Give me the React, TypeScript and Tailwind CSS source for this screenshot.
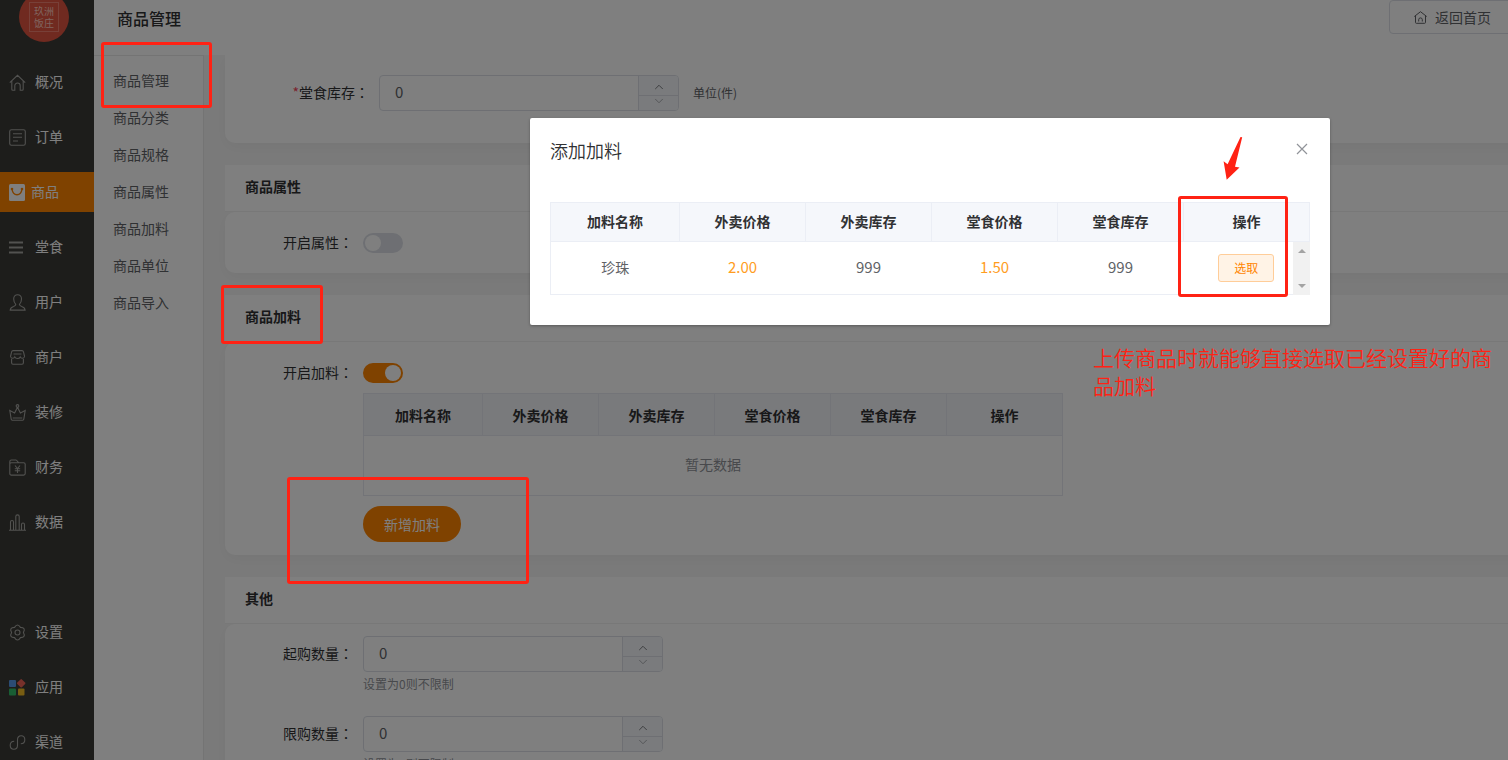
import React from "react";
import { ChevronDown, ChevronUp } from "lucide-react";
import clsx from "clsx";

const icons: Record<string, React.ReactNode> = {
  home: <path d="M.8 8.7 8.5 1.3l7.7 7.4M2.8 7v8.3c0 .6.4 1 1 1h2v-4.6a2.7 2.7 0 0 1 5.4 0v4.6h2c.6 0 1-.4 1-1V7" />,
  order: (
    <>
      <rect x=".7" y=".7" width="15.6" height="15.6" rx="1.8" />
      <path d="M4 4.7h9M4 8.3h9M4 12h5" />
    </>
  ),
  goods: (
    <>
      <rect x="0" y="0" width="16" height="17" rx="1.5" fill="#fff" stroke="none" />
      <path d="M3 5.2c1 7.4 9 7.4 10 0" stroke="#ff8400" strokeWidth="1.3" />
      <circle cx="3" cy="5" r="1.3" fill="#ff8400" stroke="none" />
      <circle cx="13" cy="5" r="1.3" fill="#ff8400" stroke="none" />
    </>
  ),
  dinein: <path d="M0 3.5h14M0 8.5h14M0 13.5h14" strokeWidth="2" />,
  user: (
    <path d="M6.8 10.3C5.3 9 4.7 7.2 4.7 5c0-2.6 1.6-4.2 3.9-4.2s3.9 1.6 3.9 4.2c0 2.2-.6 4-2.1 5.3 0 1.4.8 1.7 2.3 2.2 2.1.6 3.2 1.2 3.4 3.6H1.2c.2-2.4 1.3-3 3.4-3.6 1.5-.5 2.2-.8 2.2-2.2Z" />
  ),
  shop: (
    <>
      <path d="M1.5 7.5 2.7 2.7c.2-.8.6-1.1 1.4-1.1h8.9c.8 0 1.2.3 1.4 1.1l1.2 4.8M4.5 5h8M1.5 7.5c.5 2.3 3.5 2.4 4.3.4.9 2.1 4.4 2.1 5.4 0 .8 2 3.9 1.9 4.4-.4" />
      <path d="M2.6 9.8v4c0 .9.5 1.4 1.4 1.4h9c.9 0 1.4-.5 1.4-1.4v-4" />
    </>
  ),
  crown: (
    <>
      <circle cx="8.5" cy="1.9" r="1.3" />
      <path d="M8.5 3.2 5.6 9 .8 6.5l1.4 8.7c.1.7.5 1 1.1 1h10.4c.6 0 1-.3 1.1-1l1.4-8.7L11.4 9 8.5 3.2M3.7 14h9.6" />
    </>
  ),
  finance: (
    <>
      <path d="M.8 5V2.7C.8 1.7 1.4 1 2.4 1h4.500c1.500 0 1.500 2.700 3.200 2.700h4.500c1 0 1.600.6 1.600 1.600v9.200c0 1-.6 1.600-1.600 1.600H2.400c-1 0-1.600-.6-1.600-1.600V5c0-.8.600-1.300 1.600-1.300H10" />
      <path d="m6 6.5 2.5 3 2.5-3M8.5 9.5V14M5.8 9.7h5.4M5.8 11.8h5.4" />
    </>
  ),
  chart: <path d="M0 16.2h17M1.5 16V8c0-2 3-2 3 0v8M6.8 16V2.5c0-2.2 3.4-2.2 3.4 0V16M12.5 16v-5.5c0-2 3-2 3 0V16" />,
  gear: (
    <>
      <path
        d="M14.4 8.5Q17.2 3.5 11.45 3.4 8.5-1.5 5.55 3.4-.2 3.5 2.6 8.5-.2 13.5 5.55 13.6 8.5 18.5 11.45 13.6 17.2 13.5 14.4 8.5Z"
        strokeLinejoin="round"
      />
      <circle cx="8.5" cy="8.5" r="2.5" />
    </>
  ),
  apps: (
    <g stroke="none">
      <rect x="0" y="1" width="7" height="7" rx="1" fill="#5698e8" />
      <rect x="9" y="1" width="6.5" height="6.5" rx="1" fill="#ef6257" transform="rotate(45 12.2 4.2)" />
      <rect x="0" y="9.5" width="7" height="7" rx="1" fill="#32bd68" />
      <rect x="9" y="9.5" width="6.5" height="7" rx="1" fill="#f0ba24" />
    </g>
  ),
  channel: <path d="M5.2 7.2C2.7 7.3 1.2 9 1.2 11.3s1.6 4 3.7 4c2.2 0 3.6-1.7 3.6-4V5.7c0-2.3 1.4-4 3.6-4 2.1 0 3.7 1.7 3.7 4s-1.5 4-4 4.1" />,
};

const menu = [
  { icon: "home", label: "概况" },
  { icon: "order", label: "订单" },
  { icon: "goods", label: "商品", active: true },
  { icon: "dinein", label: "堂食" },
  { icon: "user", label: "用户" },
  { icon: "shop", label: "商户" },
  { icon: "crown", label: "装修" },
  { icon: "finance", label: "财务" },
  { icon: "chart", label: "数据" },
];

const bottomMenu = [
  { icon: "gear", label: "设置" },
  { icon: "apps", label: "应用" },
  { icon: "channel", label: "渠道" },
];

const subMenu = ["商品管理", "商品分类", "商品规格", "商品属性", "商品加料", "商品单位", "商品导入"];

const columns = ["加料名称", "外卖价格", "外卖库存", "堂食价格", "堂食库存", "操作"];

type MenuItem = { icon: string; label: string; active?: boolean };

function MenuLink({ icon, label, active }: MenuItem) {
  return (
    <a
      href="#"
      className={clsx(
        "flex h-10 shrink-0 items-center pl-[9px] text-sm text-white",
        active ? "gap-[5px] bg-[#ff8400]" : "gap-[9px]"
      )}
    >
      <svg width="17" height="17" viewBox="0 0 17 17" fill="none" stroke="#a4a4a0" strokeWidth="1.1">
        {icons[icon]}
      </svg>
      <span className="pb-0.5">{label}</span>
    </a>
  );
}

function NumberInput({ id }: { id: string }) {
  return (
    <div className="flex h-9 w-[300px] overflow-hidden rounded border border-[#dcdfe6]">
      <input
        id={id}
        inputMode="numeric"
        defaultValue="0"
        className="min-w-0 flex-1 px-[15px] pb-0.5 text-[15px] text-[#606266] outline-none"
      />
      <div className="flex w-10 flex-col border-l border-[#dcdfe6] bg-[#f5f7fa] text-[#72757a]">
        <button
          aria-label="增加"
          className="flex h-5 shrink-0 items-center justify-center border-b border-[#dcdfe6] pt-0.5"
        >
          <ChevronUp size={14} strokeWidth={1.6} />
        </button>
        <button
          aria-label="减少"
          className="flex h-3.5 shrink-0 items-center justify-center pb-1 text-[#a4a7ad]"
        >
          <ChevronDown size={14} strokeWidth={1.6} />
        </button>
      </div>
    </div>
  );
}

function Switch({ id, on }: { id: string; on?: boolean }) {
  return (
    <input
      id={id}
      type="checkbox"
      role="switch"
      defaultChecked={on}
      className="flex h-5 w-10 appearance-none items-center rounded-full bg-[#dcdfe6] px-0.5 before:size-4 before:rounded-full before:bg-white checked:justify-end checked:bg-[#ff8400]"
    />
  );
}

function Label({ htmlFor, required, children }: { htmlFor: string; required?: boolean; children: React.ReactNode }) {
  return (
    <label htmlFor={htmlFor} className="-mt-0.5 w-[138px] shrink-0 pr-2.5 text-right text-sm text-[#303133]">
      {required && <span className="text-[#f5455c]">*</span>}
      {children}
      <span className="font-['Noto_Sans_CJK_TC',sans-serif]">：</span>
    </label>
  );
}

function Card({ title, className, children }: { title: string; className?: string; children: React.ReactNode }) {
  return (
    <section className="mt-[22px]">
      <h2 className="relative flex h-[47px] items-center border-b border-[#f0f0f0] bg-white px-5 pb-1 text-sm font-bold text-[#303133]">
        {title}
      </h2>
      <div className={clsx("rounded-[10px] bg-white shadow-[0_4px_14px_rgba(0,0,0,0.04)]", className)}>{children}</div>
    </section>
  );
}

function ToppingTable() {
  return (
    <table className="w-[700px] table-fixed border-collapse text-sm">
      <thead>
        <tr className="h-[42px] bg-[#f3f5f9] text-[#303133]">
          {columns.map((name) => (
            <th key={name} className="border border-[#e6e9f0] p-0 font-bold first:w-[119px]">
              {name}
            </th>
          ))}
        </tr>
      </thead>
      <tbody>
        <tr className="h-[60px] text-[#909399]">
          <td colSpan={6} className="border border-[#e6e9f0] p-0 pb-1 text-center">
            暂无数据
          </td>
        </tr>
      </tbody>
    </table>
  );
}

function ToppingDialog() {
  return (
    <div
      role="dialog"
      aria-label="添加加料"
      className="absolute top-[118px] left-[530px] w-[800px] rounded-xs bg-white px-5 pb-[30px] shadow-[0_1px_3px_rgba(0,0,0,0.3)]"
    >
      <div className="flex h-[84px] items-start justify-between pt-5">
        <h2 className="text-lg leading-6 font-[350] text-[#303133]">添加加料</h2>
        <button aria-label="关闭" className="pt-[3px] text-[#909399]">
          <svg width="16" height="16" viewBox="0 0 16 16" fill="none" stroke="currentColor" strokeWidth="1.2">
            <path d="m3 3 10 10M13 3 3 13" />
          </svg>
        </button>
      </div>
      <div className="relative">
        <table className="w-full table-fixed border-collapse text-center">
          <thead>
            <tr className="h-[39px] bg-[#f5f7fb] text-sm text-[#303133]">
              {columns.map((name) => (
                <th key={name} className="border border-[#ebeef5] p-0 pb-0.5 font-bold first:w-[129px]">
                  {name}
                </th>
              ))}
            </tr>
          </thead>
          <tbody>
            <tr className="h-[53px] border border-[#ebeef5] text-[15px] text-[#606266]">
              <td className="p-0 pb-0.5 text-sm">珍珠</td>
              <td className="p-0 pb-0.5 text-[#ff9d1e]">2.00</td>
              <td className="p-0 pb-0.5">999</td>
              <td className="p-0 pb-0.5 text-[#ff9d1e]">1.50</td>
              <td className="p-0 pb-0.5">999</td>
              <td className="p-0">
                <button className="h-7 w-14 rounded-[3px] border border-[#ffcd99] bg-[#fff3e6] text-xs text-[#ff8400]">
                  选取
                </button>
              </td>
            </tr>
          </tbody>
        </table>
        <div className="absolute right-0 bottom-0 flex h-[53px] w-[17px] flex-col items-center justify-between bg-[#f1f1f1] py-[7px]">
          <svg width="8" height="4" viewBox="0 0 8 4" fill="#a3a3a3">
            <path d="M0 4 4 0l4 4Z" />
          </svg>
          <svg width="8" height="4" viewBox="0 0 8 4" fill="#a3a3a3">
            <path d="m0 0 4 4 4-4Z" />
          </svg>
        </div>
      </div>
    </div>
  );
}

// Red marks drawn over the page to explain the feature
function Annotations() {
  return (
    <div className="pointer-events-none">
      <div className="absolute top-[42px] left-[101px] h-[66px] w-[111px] rounded-[3px] border-3 border-[#ff2214]" />
      <div className="absolute top-[285px] left-[221px] h-[59px] w-[102px] rounded-[3px] border-3 border-[#ff2214]" />
      <div className="absolute top-[477px] left-[287px] h-[107px] w-[242px] rounded-[3px] border-3 border-[#ff2214]" />
      <div className="absolute top-[196px] left-[1178px] h-[101px] w-[110px] rounded-[3px] border-3 border-[#ff2214]" />
      <svg className="absolute top-[136px] left-[1222px]" width="22" height="46" viewBox="0 0 22 46" fill="#ff2214">
        <path d="m18.5 1 1.7.3L13 30.8l4.5.7L4.7 43.7 1.6 25.3l4 3Z" />
      </svg>
      <p className="absolute top-[343px] left-[1093px] w-[402px] text-[21px] leading-7 font-[350] text-[#ff2214]">
        上传商品时就能够直接选取已经设置好的商品加料
      </p>
    </div>
  );
}

export default function App() {
  return (
    <div className="relative flex h-screen overflow-hidden bg-white font-['Noto_Sans_CJK_SC',sans-serif]">
      <nav className="flex w-[94px] shrink-0 flex-col gap-[15px] overflow-hidden bg-[#3a3a36]">
        <div className="-mt-2 mb-[5px] ml-[19px] flex size-[50px] shrink-0 items-center justify-center rounded-full bg-[#e05440]">
          <div className="flex size-[30px] items-center justify-center border border-[#f08070] text-center text-[10px] leading-3 text-[#ffc8be]">
            玖洲
            <br />
            饭庄
          </div>
        </div>
        {menu.map((item) => (
          <MenuLink key={item.label} {...item} />
        ))}
        <div className="h-10 shrink-0" />
        {bottomMenu.map((item) => (
          <MenuLink key={item.label} {...item} />
        ))}
      </nav>

      <div className="flex min-w-0 flex-1 flex-col">
        <header className="flex h-[55px] shrink-0 items-start justify-between pl-[23px]">
          <h1 className="pt-1.5 text-base leading-6 font-medium text-[#303133]">商品管理</h1>
          <button className="-mr-2 flex h-[34px] items-center gap-2 rounded border border-[#dcdfe6] px-6 text-sm text-[#606266]">
            <svg width="13" height="13" viewBox="0 0 13 13" fill="none" stroke="currentColor">
              <path d="M.3 5.5 6.5.7l6.2 4.8M1.5 5v6.5c0 .5.3.8.8.8h8.4c.5 0 .8-.3.8-.8V5M4.7 10.5V8.7a1.8 1.8 0 0 1 3.6 0v1.8" />
            </svg>
            返回首页
          </button>
        </header>

        <div className="flex min-h-0 flex-1">
          <aside className="w-[110px] shrink-0 border-t border-r border-[#e8e8e8] pt-1.5">
            {subMenu.map((name) => (
              <a key={name} href="#" className="flex h-[37px] items-center pb-0.5 pl-[19px] text-sm text-[#606266]">
                {name}
              </a>
            ))}
          </aside>

          <main className="min-w-0 flex-1 overflow-hidden bg-[#f5f5f5] pl-[21px]">
            <div className="-mr-5">
              <div className="flex items-center rounded-b-[10px] bg-white pt-5 pb-8 pl-4 shadow-[0_4px_14px_rgba(0,0,0,0.04)]">
                <Label htmlFor="dine-stock" required>
                  堂食库存
                </Label>
                <NumberInput id="dine-stock" />
                <span className="pl-3.5 text-xs text-[#606266]">单位(件)</span>
              </div>

              <Card title="商品属性" className="flex items-center pt-[21px] pb-5">
                <Label htmlFor="attr-switch">开启属性</Label>
                <Switch id="attr-switch" />
              </Card>

              <Card title="商品加料" className="pt-[21px] pb-[13px]">
                <div className="flex items-center">
                  <Label htmlFor="topping-switch">开启加料</Label>
                  <Switch id="topping-switch" on />
                </div>
                <div className="pt-2.5 pl-[138px]">
                  <ToppingTable />
                  <button className="mt-2.5 h-9 rounded-full bg-[#ff8400] px-[21px] text-sm text-white">
                    新增加料
                  </button>
                </div>
              </Card>

              <Card title="其他" className="pt-3 pb-5">
                <div className="flex items-center">
                  <Label htmlFor="min-count">起购数量</Label>
                  <NumberInput id="min-count" />
                </div>
                <p className="mb-5 pl-[138px] text-xs leading-6 text-[#909399]">设置为0则不限制</p>
                <div className="flex items-center">
                  <Label htmlFor="max-count">限购数量</Label>
                  <NumberInput id="max-count" />
                </div>
                <p className="pl-[138px] text-xs leading-6 text-[#909399]">设置为0则不限制</p>
              </Card>
            </div>
          </main>
        </div>
      </div>

      <div className="absolute inset-0 bg-black/50" />
      <ToppingDialog />
      <Annotations />
    </div>
  );
}
